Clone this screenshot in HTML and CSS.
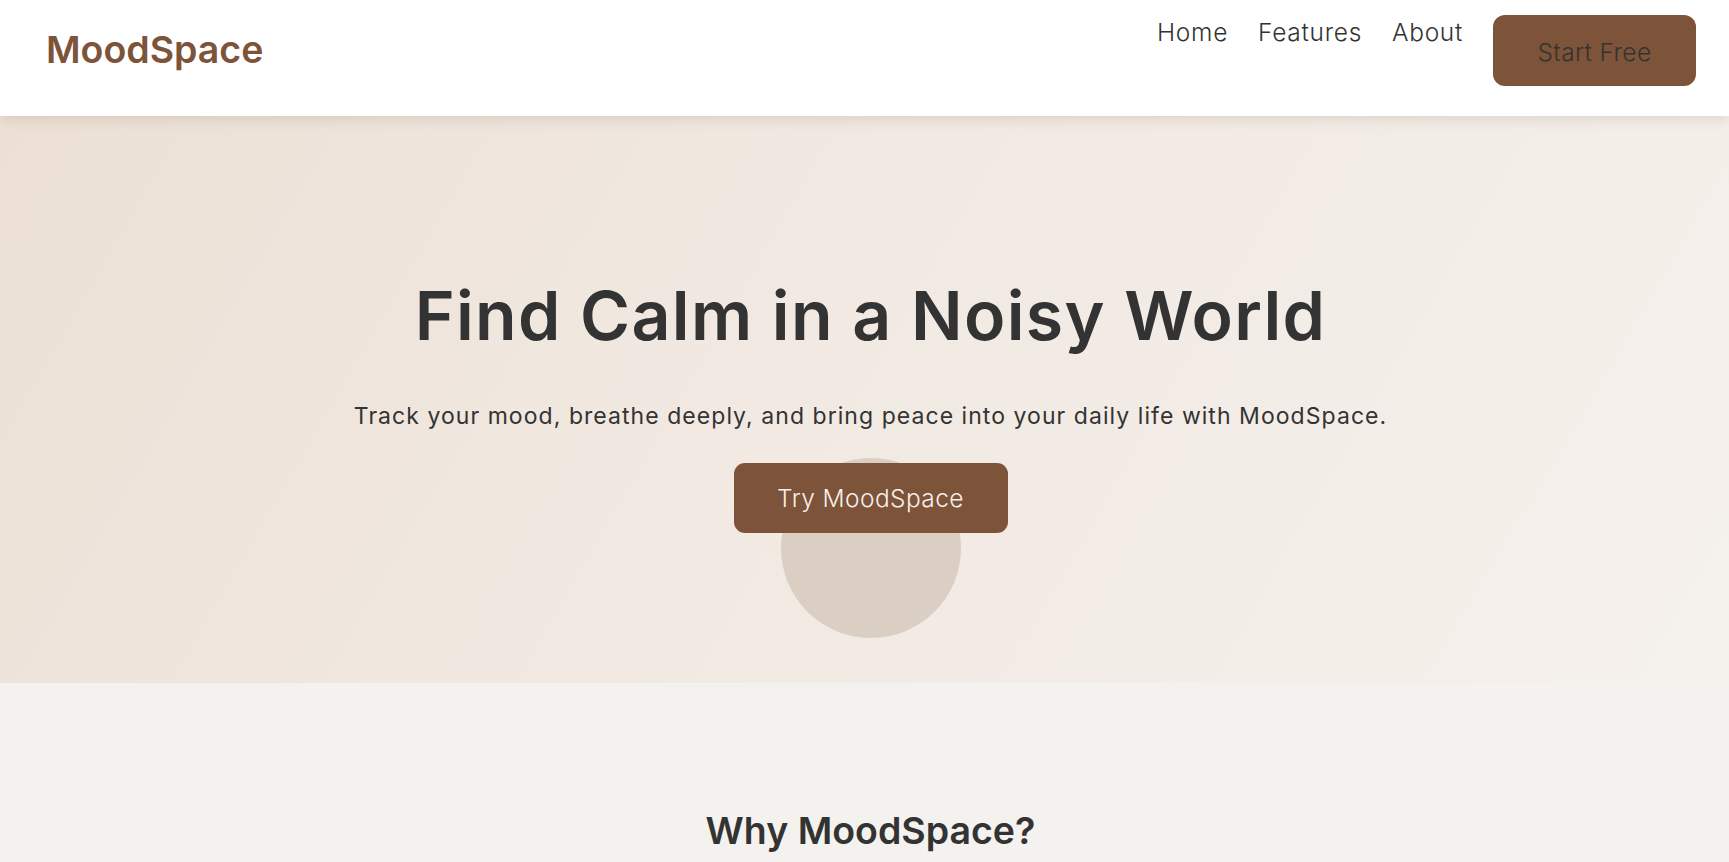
FILE: index.html
```html
<!DOCTYPE html>
<html lang="en">
<head>
<meta charset="utf-8">
<title>MoodSpace</title>
<link rel="stylesheet" href="styles.css">
</head>
<body>
<header class="site-header">
  <div class="logo">MoodSpace</div>
  <nav class="nav">
    <a class="nav-link" href="#">Home</a>
    <a class="nav-link" href="#">Features</a>
    <a class="nav-link" href="#">About</a>
    <a class="nav-cta" href="#">Start Free</a>
  </nav>
</header>
<section class="hero">
  <h1 class="hero-title">Find Calm in a Noisy World</h1>
  <p class="hero-sub">Track your mood, breathe deeply, and bring peace into your daily life with MoodSpace.</p>
  <a class="hero-btn" href="#">Try MoodSpace</a>
  <div class="breath-circle"></div>
</section>
<section class="features">
  <h2 class="features-title">Why MoodSpace?</h2>
</section>
</body>
</html>
```
FILE: styles.css
```css
* { box-sizing: border-box; }
html, body { margin: 0; padding: 0; }
body {
  font-family: "Inter", "Open Sans", sans-serif;
  color: #333;
  background: #f4f2ee;
  overflow: hidden;
}
a { text-decoration: none; color: inherit; }

.site-header {
  height: 116px;
  background: #fff;
  display: flex;
  justify-content: space-between;
  align-items: flex-start;
  padding: 0 33px 0 46px;
  box-shadow: 0 3px 12px rgba(90, 60, 30, 0.14);
  position: relative;
  z-index: 2;
}
.logo {
  font-size: 37.5px;
  font-weight: 600;
  color: #7d5339;
  line-height: 1;
  margin-top: 31px;
  letter-spacing: 0;
}
.nav {
  display: flex;
  align-items: flex-start;
  gap: 30px;
  padding-top: 15px;
}
.nav-link {
  font-size: 24.5px;
  font-weight: 300;
  color: #333;
  line-height: 1;
  margin-top: 5px;
  letter-spacing: 0.7px;
}
.nav-cta {
  display: flex;
  align-items: center;
  justify-content: center;
  width: 203px;
  height: 71px;
  background: #7d5339;
  border-radius: 12px;
  font-size: 24.5px;
  font-weight: 300;
  color: #333;
  letter-spacing: 0.4px;
  padding-top: 2px;
}

.hero {
  height: 567px;
  background: linear-gradient(120deg, #ece0d5 0%, #f1e9e2 45%, #f5f1ec 100%);
  display: flex;
  flex-direction: column;
  align-items: center;
  padding: 159px 0 0 12px;
}
.hero-title {
  margin: 0;
  font-size: 68px;
  font-weight: 600;
  line-height: 1.2;
  color: #333;
  letter-spacing: 1.3px;
}
.hero-sub {
  margin: 43px 0 0;
  font-size: 23px;
  font-weight: 400;
  line-height: 33px;
  color: #333;
  letter-spacing: 1.05px;
}
.hero-btn {
  position: relative;
  z-index: 1;
  margin-top: 30px;
  display: flex;
  align-items: center;
  justify-content: center;
  width: 274px;
  height: 70px;
  background: #7d5339;
  border-radius: 11px;
  color: #f6f0ea;
  font-size: 24.5px;
  font-weight: 300;
  letter-spacing: 0.4px;
}
.breath-circle {
  width: 180px;
  height: 180px;
  border-radius: 50%;
  background: #dbcec3;
  margin-top: -75px;
}

.features {
  background: #f4f2ee;
  padding-top: 125px;
  display: flex;
  justify-content: center;
  padding-left: 12px;
}
.features-title {
  margin: 0;
  font-size: 37.5px;
  font-weight: 600;
  line-height: 1.2;
  color: #333;
}
```
